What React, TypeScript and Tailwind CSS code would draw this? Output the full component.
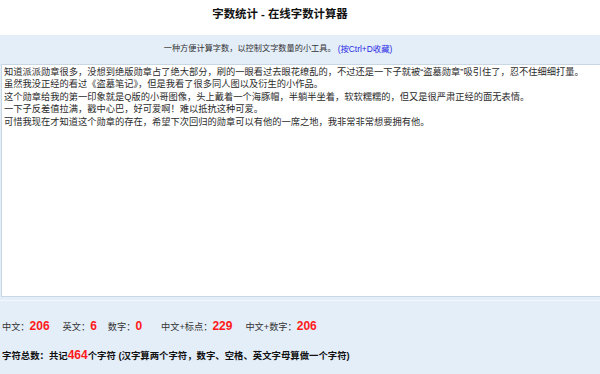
import { useState } from "react"

const initialText = [
  "知道派派勋章很多，没想到绝版勋章占了绝大部分，刷的一眼看过去眼花缭乱的，不过还是一下子就被“盗墓勋章”吸引住了，忍不住细细打量。",
  "虽然我没正经的看过《盗墓笔记》，但是我看了很多同人图以及衍生的小作品。",
  "这个勋章给我的第一印象就是Q版的小哥图像，头上戴着一个海豚帽，半躺半坐着，软软糯糯的，但又是很严肃正经的面无表情。",
  "一下子反差值拉满，戳中心巴，好可爱啊！难以抵抗这种可爱。",
  "可惜我现在才知道这个勋章的存在，希望下次回归的勋章可以有他的一席之地，我非常非常想要拥有他。",
].join("\n")

const font = "font-['Liberation_Sans','Noto_Sans_CJK_SC',sans-serif]"

function Stat({ label, value, className }: { label: string; value: number; className?: string }) {
  return (
    <span className={className}>
      <span className="text-[9.2px] text-[#333]">{label}</span>
      <span className="text-[12px] font-bold text-[#ff1a1a]">{value}</span>
    </span>
  )
}

export default function App() {
  const [text, setText] = useState(initialText)

  return (
    <div className={`${font} w-[600px] h-[374px] overflow-hidden bg-[#e4eef9]`}>
      <div className="h-[35px] bg-white">
        <h1 className="w-[560px] pt-[6px] text-center text-[11.4px] leading-[16px] font-bold text-[#111]">
          字数统计 - 在线字数计算器
        </h1>
      </div>
      <div className="h-[29px] w-[556px] flex items-center justify-center text-[8.2px] text-[#333]">
        <span>一种方便计算字数，以控制文字数量的小工具。</span>
        <span className="ml-[2px] text-[8.4px] text-[#2a2ae6]">(按Ctrl+D收藏)</span>
      </div>
      <textarea
        value={text}
        onChange={(e) => setText(e.target.value)}
        className={`${font} block ml-[1px] w-[599px] h-[233px] resize-none overflow-hidden bg-white border border-r-0 border-[#c9d6e4] pl-[2px] pt-[1px] text-[9.25px] leading-[12.4px] text-[#2b2b2b] outline-none`}
      />
      <div className="mt-[3px] border-t border-[#f4f8fd] pl-[2px] pt-[16px]">
        <div className="flex items-baseline leading-[16px]">
          <Stat label="中文：" value={206} />
          <Stat label="英文：" value={6} className="ml-[13px]" />
          <Stat label="数字：" value={0} className="ml-[11px]" />
          <Stat label="中文+标点：" value={229} className="ml-[19px]" />
          <Stat label="中文+数字：" value={206} className="ml-[13px]" />
        </div>
        <div className="mt-[13px] leading-[14px] text-[9.4px] font-bold text-[#111]">
          字符总数：共记<span className="text-[12px] text-[#ff1a1a]">464</span>个字符 (汉字算两个字符，数字、空格、英文字母算做一个字符)
        </div>
      </div>
    </div>
  )
}
